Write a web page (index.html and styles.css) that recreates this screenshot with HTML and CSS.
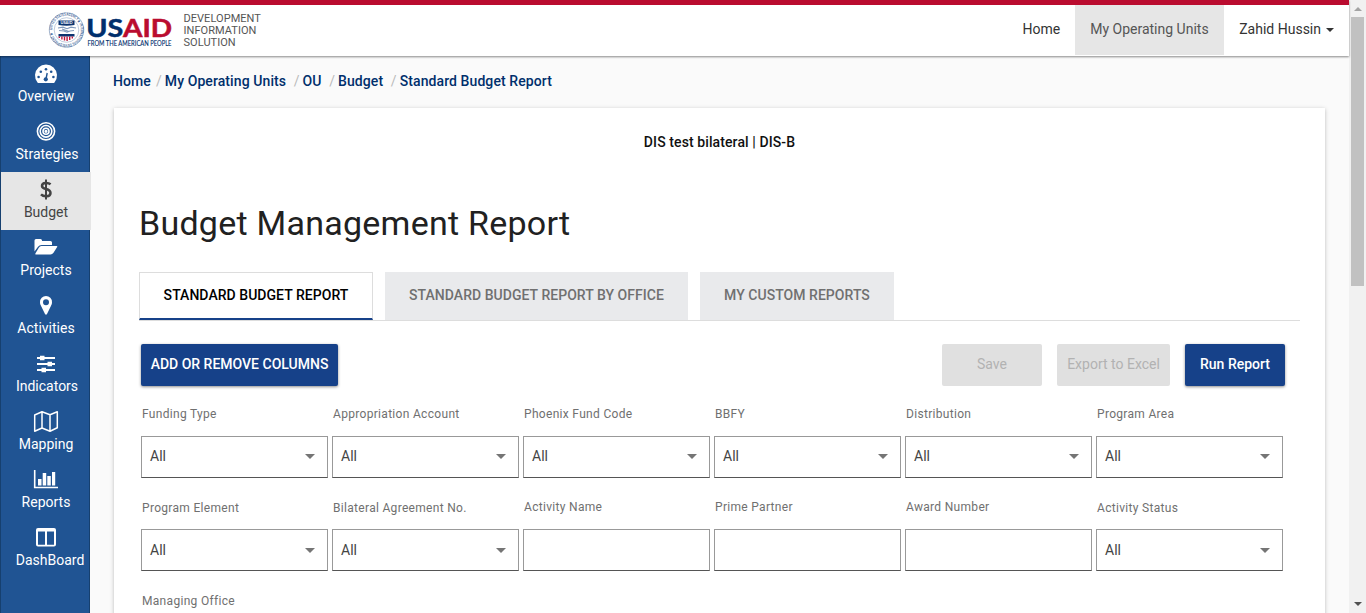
FILE: index.html
```html
<!DOCTYPE html>
<html lang="en">
<head>
<meta charset="utf-8">
<title>Budget Management Report</title>
<link rel="stylesheet" href="styles.css">
</head>
<body>
<div class="window">
  <div class="app">
    <header class="header">
      <a class="brand">
        <svg class="logo" width="126" height="40" viewBox="0 0 126 40">
          <defs><path id="ring" d="M4.200 20a14.300 14.300 0 1 1 28.600 0a14.300 14.300 0 1 1-28.600 0"/></defs>
          <circle cx="18.500" cy="20" r="17.200" fill="#fff" stroke="#8ba2c2" stroke-width=".8"/>
          <circle cx="18.500" cy="20" r="12.300" fill="#fff" stroke="#a5b6ce" stroke-width=".7"/>
          <text font-size="4.200" font-weight="700" fill="#3a6196" textLength="87" lengthAdjust="spacingAndGlyphs"><textPath href="#ring">UNITED STATES AGENCY ★ INTERNATIONAL DEVELOPMENT ★</textPath></text>
          <path d="M10.500 10.500h16v4.500q-8 1.500-16 0z" fill="#0b3470"/>
          <text x="18.500" y="14.300" font-size="4" font-weight="700" fill="#fff" text-anchor="middle">USAID</text>
          <path d="M10 18l5-.8 4 1.500 4-1.500 5 .8M11 20.500l5 .5 3 1.200 3-1.200 4-.5M14 19l7 2.500" fill="none" stroke="#8099bb" stroke-width="1.200"/>
          <path d="M10.500 24h16v2.500h-16z" fill="#0b3470"/>
          <path d="M11.300 26.500v1.500M13.900 26.500v3M16.500 26.500v4M19.100 26.500v4.500M21.700 26.500v3.500M24.300 26.500v2" stroke="#c0143c" stroke-width="1.400"/>
          <text x="38.300" y="26.700" font-size="24.500" font-weight="700" fill="#002f6c" stroke="#002f6c" stroke-width=".5" textLength="37" lengthAdjust="spacingAndGlyphs">US</text>
          <text x="75" y="26.700" font-size="24.500" font-weight="700" fill="#ba0c2f" stroke="#ba0c2f" stroke-width=".5" textLength="49" lengthAdjust="spacingAndGlyphs">AID</text>
          <text x="39.500" y="35.700" font-size="6.700" fill="#002f6c" stroke="#002f6c" stroke-width=".1" textLength="84" lengthAdjust="spacingAndGlyphs">FROM THE AMERICAN PEOPLE</text>
        </svg>
        <span class="product">DEVELOPMENT<br>INFORMATION<br>SOLUTION</span>
      </a>
      <nav class="topnav">
        <a class="top-link">Home</a>
        <a class="top-link top-link-active">My Operating Units</a>
        <a class="top-link">Zahid Hussin<i class="caret"></i></a>
      </nav>
    </header>
    <div class="body">
      <nav class="sidebar">
        <a class="side-item"><svg width="24" height="22" viewBox="0 -1 24 22"><path d="M3.500 19.500A11 11 0 1 1 20.500 19.500Q20 20 19.500 20H4.500Q4 20 3.500 19.500z" fill="#fff" transform="translate(0 -1)"/><g fill="#205493" transform="translate(0 -1)"><circle cx="4.600" cy="14" r="1.300"/><circle cx="6.800" cy="8.700" r="1.300"/><circle cx="12" cy="6.300" r="1.300"/><circle cx="17.200" cy="8.700" r="1.300"/><circle cx="19.400" cy="14" r="1.300"/><circle cx="11.800" cy="16.300" r="2.100"/></g><path d="M11.900 15.500l1.300-6.500" stroke="#205493" stroke-width="1.400"/></svg><span>Overview</span></a>
        <a class="side-item"><svg width="22" height="22" viewBox="0 .7 22 22" fill="none" stroke="#fff" stroke-width="1.600"><circle cx="11" cy="11" r="8.600"/><circle cx="11" cy="11" r="5.800"/><circle cx="11" cy="11" r="3"/><circle cx="11" cy="11" r=".8"/></svg><span class="nudge">Strategies</span></a>
        <a class="side-item side-item-active"><svg width="24" height="22" viewBox="0 .5 24 22" fill="none" stroke="#444" stroke-width="2.500"><path d="M12 1v20" stroke-width="2"/><path d="M16.600 5.800C14.500 4.100 8 3.400 8 7.400C8 11.700 16.500 9.400 16.500 14.400C16.500 18.700 9.500 18.400 7 15.900"/></svg><span>Budget</span></a>
        <a class="side-item"><svg width="24" height="22" viewBox="0 1 24 22" fill="#fff"><path d="M.5 15.500V4.500Q.5 3 2 3H6.500Q8 3 8 4.500V5H16.500Q18 5 18 6.500V9H7.500Q5.300 9 4 10.700z"/><path d="M7.300 10H22.500Q24 10 23 11.300L19.500 16.700Q18.300 18.500 16.500 18.500H2Q.6 18.500 1.500 17.200L4.800 11.700Q5.800 10 7.300 10z"/></svg><span>Projects</span></a>
        <a class="side-item"><svg width="24" height="22" viewBox="0 1 24 22"><path fill="#fff" fill-rule="evenodd" d="M12 2a6 6 0 0 0-6 6.200C6 10 6.600 11 7.200 12.200L11 20Q12 21.300 13 20L16.800 12.200C17.400 11 18 10 18 8.200A6 6 0 0 0 12 2zM12 5.200a3 3 0 1 1 0 6a3 3 0 0 1 0-6z"/></svg><span>Activities</span></a>
        <a class="side-item"><svg width="24" height="22" viewBox="0 0 24 22"><path d="M3 5h18M3 11h18M3 17h18" stroke="#fff" stroke-width="2"/><path d="M6 2.700h4.500v4.600H6zM13.500 8.700H18v4.600h-4.500zM7.500 14.700H12v4.600H7.500z" fill="#fff"/></svg><span class="nudge">Indicators</span></a>
        <a class="side-item"><svg width="26" height="22" viewBox="0 .5 26 22" fill="none" stroke="#fff" stroke-width="1.500" stroke-linejoin="round"><path d="M1.700 4.500L9 1.300L17 4.200L24.300 1.300V17.200L17 20.700L9 17.500L1.700 20.700zM9 1.300V17.500M17 4.200V20.700"/></svg><span>Mapping</span></a>
        <a class="side-item"><svg width="26" height="22" viewBox="0 1 26 22"><path d="M1.700 2V19.500H25" fill="none" stroke="#fff" stroke-width="1.600"/><path d="M5 11h3.500v6.500H5zM9.700 5h3.500v12.500H9.700zM14.300 8h3.500v9.500h-3.500zM19 4h3.200v13.500H19z" fill="#fff"/></svg><span>Reports</span></a>
        <a class="side-item"><svg width="24" height="22" viewBox="0 1 24 22"><path fill="#fff" fill-rule="evenodd" d="M4 2H20Q22 2 22 4V18.500Q22 20.500 20 20.500H4Q2 20.500 2 18.500V4Q2 2 4 2zM4 5.500V18.700H11V5.500zM13 5.500V18.700H20V5.500z"/></svg><span class="nudge-far">DashBoard</span></a>
      </nav>
      <main class="main">
        <nav class="crumbs">
          <a>Home</a><i>/</i><a>My Operating Units</a><i class="wide">/</i><a>OU</a><i class="wide">/</i><a>Budget</a><i class="wide">/</i><a>Standard Budget Report</a>
        </nav>
        <section class="card">
          <p class="unit">DIS test bilateral | DIS-B</p>
          <h1 class="title">Budget Management Report</h1>
          <div class="tabs">
            <a class="tab tab-active">STANDARD BUDGET REPORT</a>
            <a class="tab tab-office">STANDARD BUDGET REPORT BY OFFICE</a>
            <a class="tab tab-custom">MY CUSTOM REPORTS</a>
          </div>
          <div class="actions">
            <button class="btn btn-columns">ADD OR REMOVE COLUMNS</button>
            <button class="btn btn-disabled btn-save">Save</button>
            <button class="btn btn-disabled btn-export">Export to Excel</button>
            <button class="btn btn-run">Run Report</button>
          </div>
          <div class="filters">
            <div class="field"><label>Funding Type</label><div class="box">All<i class="arrow"></i></div></div>
            <div class="field"><label>Appropriation Account</label><div class="box">All<i class="arrow"></i></div></div>
            <div class="field"><label>Phoenix Fund Code</label><div class="box">All<i class="arrow"></i></div></div>
            <div class="field"><label>BBFY</label><div class="box">All<i class="arrow"></i></div></div>
            <div class="field"><label>Distribution</label><div class="box">All<i class="arrow"></i></div></div>
            <div class="field"><label>Program Area</label><div class="box">All<i class="arrow"></i></div></div>
            <div class="field low"><label>Program Element</label><div class="box">All<i class="arrow"></i></div></div>
            <div class="field low"><label>Bilateral Agreement No.</label><div class="box">All<i class="arrow"></i></div></div>
            <div class="field"><label>Activity Name</label><div class="box"></div></div>
            <div class="field"><label>Prime Partner</label><div class="box"></div></div>
            <div class="field"><label>Award Number</label><div class="box"></div></div>
            <div class="field low"><label>Activity Status</label><div class="box">All<i class="arrow"></i></div></div>
            <div class="field low"><label>Managing Office</label></div>
          </div>
        </section>
      </main>
    </div>
  </div>
  <div class="scrollbar"><i class="scroll-up"></i><div class="thumb"></div><i class="scroll-down"></i></div>
</div>
</body>
</html>
```
FILE: styles.css
```css
* { box-sizing: border-box; }
body { margin: 0; font-family: Roboto, sans-serif; font-size: 14px; color: #212121; background: #fafafa; overflow: hidden; }
.window { display: flex; width: 1366px; height: 613px; overflow: hidden; }
.app { width: 1349px; display: flex; flex-direction: column; }
.header { height: 56px; flex: none; display: flex; justify-content: space-between; background: #fff; border-top: 5px solid #ba0c2f; box-shadow: 0 1px 2px rgba(0,0,0,.45); position: relative; z-index: 1; }
.brand { display: flex; padding: 5px 0 0 48px; }
.logo { font-family: Lato, sans-serif; flex: none; overflow: visible; margin-left: -.5px; }
.product { margin: 3px 0 0 10px; font-size: 11px; line-height: 12px; letter-spacing: .05px; color: #555; white-space: nowrap; }
.topnav { display: flex; height: 50px; }
.top-link { display: flex; align-items: center; padding: 0 15px 2px; color: #333; white-space: nowrap; }
.top-link-active { background: #e6e6e6; color: #555; width: 149px; }
.caret { border: 4px solid transparent; border-top-color: #333; border-bottom: 0; margin: 2px 0 0 5px; }
.body { flex: 1; display: flex; min-height: 0; }
.sidebar { width: 90px; flex: none; background: #205493; border-left: 1px solid #16406f; border-right: 1px solid #16406f; }
.side-item { height: 58px; width: 90px; display: flex; flex-direction: column; align-items: center; padding-top: 7px; color: #fff; line-height: 20px; }
.side-item svg { flex: none; margin-bottom: 1px; overflow: visible; }
.side-item span { white-space: nowrap; }
.side-item-active { background: #e6e6e6; color: #444; position: relative; }
.nudge { margin-left: 2px; }
.nudge-far { margin-left: 8px; }
.main { flex: 1; min-width: 0; padding: 15px 24px 0; }
.crumbs { display: flex; height: 20px; line-height: 20px; margin-left: -1px; font-weight: 500; letter-spacing: .09px; color: #002f6c; white-space: nowrap; }
.crumbs i { font-style: normal; font-weight: 400; color: #bbb; padding: 0 3px 0 5px; }
.crumbs .wide { padding-left: 7.600px; }
.card { margin-top: 17px; height: 700px; background: #fff; box-shadow: 0 1px 4px rgba(0,0,0,.25); padding: 24px 25px 0; }
.unit { margin: 0; line-height: 20px; text-align: center; font-weight: 500; letter-spacing: .1px; color: #111; }
.title { margin: 51px 0 0; line-height: 40px; font-size: 34px; font-weight: 400; letter-spacing: .25px; color: #212121; white-space: nowrap; }
.tabs { display: flex; gap: 12px; margin-top: 29px; height: 49px; border-bottom: 1px solid #ddd; }
.tab { height: 48px; display: flex; align-items: center; justify-content: center; padding-bottom: 2px; font-weight: 500; letter-spacing: .04px; color: #707070; background: #e9eaec; white-space: nowrap; }
.tab-active { width: 234px; background: #fff; color: #000; border: 1px solid #ddd; border-bottom: 2px solid #164189; padding: 0 0 1px; }
.tab-office { width: 303px; }
.tab-custom { width: 194px; }
.actions { display: flex; gap: 15px; margin-top: 23px; padding: 0 15px 0 2px; }
.btn { height: 42px; width: 100px; border: 0; border-radius: 2px; padding: 0 0 2px; font: 500 14px Roboto, sans-serif; color: #fff; background: #164189; box-shadow: 0 1px 3px rgba(0,0,0,.45); white-space: nowrap; }
.btn-columns { width: 197px; margin-right: auto; }
.btn-disabled { background: #e0e0e0; color: #b2b2b2; box-shadow: none; font-weight: 400; }
.btn-export { width: 113px; }
.filters { display: grid; grid-template-columns: repeat(6, 187px); grid-auto-rows: 74px; gap: 19px 4px; margin: 18px 0 0 2px; }
.field label { display: block; height: 32px; padding: 2px 0 0 1px; line-height: 16px; font-size: 12px; letter-spacing: .31px; color: #707070; white-space: nowrap; }
.low label { padding-top: 3px; }
.box { height: 42px; display: flex; align-items: center; justify-content: space-between; padding: 0 12px 2px 8px; border: 1px solid #999; border-bottom-color: #555; color: #444; }
.arrow { border: 5px solid transparent; border-top-color: #757575; border-bottom: 0; margin-top: 1px; }
.low .box { padding-bottom: 0; }
.scrollbar { width: 17px; background: #f1f1f1; display: flex; flex-direction: column; align-items: center; padding: 7px 0; }
.scroll-up { border: 4px solid transparent; border-bottom-color: #a3a3a3; border-top: 0; }
.thumb { width: 13px; height: 269px; margin: 6px 0 auto; background: #c1c1c1; }
.scroll-down { border: 4px solid transparent; border-top-color: #505050; border-bottom: 0; }
```
